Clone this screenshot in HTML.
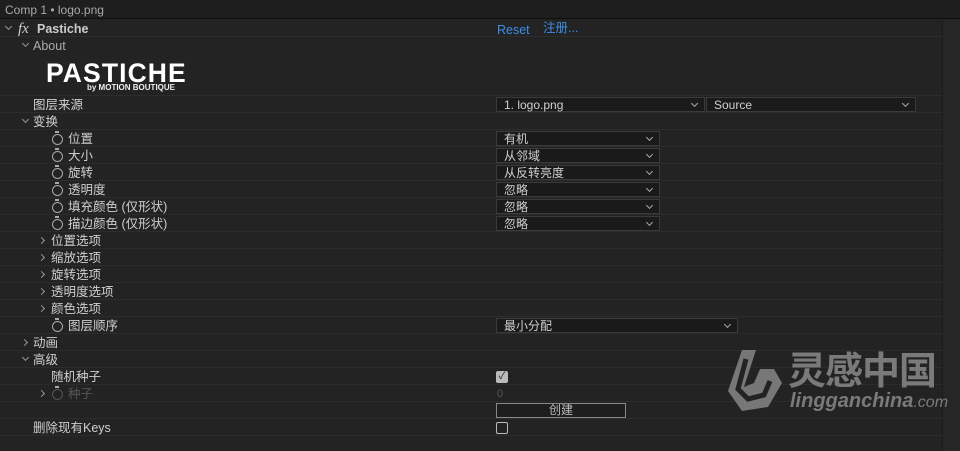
<!DOCTYPE html>
<html><head><meta charset="utf-8"><style>
*{margin:0;padding:0;box-sizing:border-box}
body{width:960px;height:451px;background:#232323;overflow:hidden;position:relative;font-family:"Liberation Sans","Noto Sans CJK SC",sans-serif;font-size:12px;color:#c8c8c8}
.top{position:absolute;left:0;top:0;width:960px;height:19px;background:#1e1e1e;border-bottom:1px solid #0e0e0e}
.top span{position:absolute;left:5px;top:3px;font-size:12px;line-height:14px;color:#a8a8a8}
.row{position:absolute;left:0;width:942px;height:17px;border-bottom:1px solid #2c2c2c}
.t{position:absolute;top:1px;height:16px;line-height:16px;white-space:nowrap;font-size:12.5px;color:#cfcfcf}
.ar{position:absolute;top:4px;width:8px;height:8px}
.ar.d:before,.ar.r:before{content:"";position:absolute;left:1px;top:0;width:4px;height:4px;border-right:1px solid #999;border-bottom:1px solid #999}
.ar.d:before{transform:rotate(45deg)}
.ar.r:before{transform:rotate(-45deg);top:2px}
.sw{position:absolute;top:4px;width:11px;height:11px;border:1.5px solid #aaa;border-radius:50%}
.sw:before{content:"";position:absolute;left:2px;top:-4px;width:4px;height:2px;background:#aaa}
.dd{position:absolute;height:15px;background:#1a1a1a;border:1px solid #3a3a3a;color:#d0d0d0;font-size:12px;padding-left:7px;line-height:14px;white-space:nowrap}
.dd:after{content:"";position:absolute;right:7px;top:3px;width:4px;height:4px;border-right:1px solid #aaa;border-bottom:1px solid #aaa;transform:rotate(45deg)}
.sb{position:absolute;left:942px;top:20px;width:18px;height:431px;background:#262626;border-left:1px solid #1c1c1c}
</style></head><body>
<div class="top"><span>Comp 1 • logo.png</span></div>
<div class="sb"></div>
<div class="row" style="top:20px"><span class="ar d" style="left:5px"></span><span class="t" style="left:18px;font-style:italic;font-family:'Liberation Serif',serif;font-size:15px">fx</span><span class="t" style="left:37px;font-weight:bold;color:#ccc">Pastiche</span><span class="t" style="left:497px;top:2px;color:#3d8ee6">Reset</span><span class="t" style="left:543px;top:0px;color:#3d8ee6">注册...</span></div>
<div class="row" style="top:37px;border:none"><span class="ar d" style="left:22px"></span><span class="t" style="left:33px;color:#aaa">About</span></div>
<div class="row" style="top:54px;height:42px"><span style="position:absolute;left:46px;top:5px;line-height:28px;font-weight:900;font-size:26.5px;color:#fff;letter-spacing:1.1px">PASTICHE</span><span style="position:absolute;left:87px;top:29px;line-height:9px;font-size:8px;font-weight:bold;color:#eee">by MOTION BOUTIQUE</span></div>
<div class="row" style="top:96px"><span class="t" style="left:33px">图层来源</span><div class="dd" style="left:496px;top:1px;width:209px">1. logo.png</div><div class="dd" style="left:706px;top:1px;width:210px">Source</div></div>
<div class="row" style="top:113px"><span class="ar d" style="left:22px"></span><span class="t" style="left:33px">变换</span></div>
<div class="row" style="top:130px"><span class="sw" style="left:52px"></span><span class="t" style="left:68px">位置</span><div class="dd" style="left:496px;top:1px;width:164px">有机</div></div>
<div class="row" style="top:147px"><span class="sw" style="left:52px"></span><span class="t" style="left:68px">大小</span><div class="dd" style="left:496px;top:1px;width:164px">从邻域</div></div>
<div class="row" style="top:164px"><span class="sw" style="left:52px"></span><span class="t" style="left:68px">旋转</span><div class="dd" style="left:496px;top:1px;width:164px">从反转亮度</div></div>
<div class="row" style="top:181px"><span class="sw" style="left:52px"></span><span class="t" style="left:68px">透明度</span><div class="dd" style="left:496px;top:1px;width:164px">忽略</div></div>
<div class="row" style="top:198px"><span class="sw" style="left:52px"></span><span class="t" style="left:68px">填充颜色 (仅形状)</span><div class="dd" style="left:496px;top:1px;width:164px">忽略</div></div>
<div class="row" style="top:215px"><span class="sw" style="left:52px"></span><span class="t" style="left:68px">描边颜色 (仅形状)</span><div class="dd" style="left:496px;top:1px;width:164px">忽略</div></div>
<div class="row" style="top:232px"><span class="ar r" style="left:38px"></span><span class="t" style="left:51px">位置选项</span></div>
<div class="row" style="top:249px"><span class="ar r" style="left:38px"></span><span class="t" style="left:51px">缩放选项</span></div>
<div class="row" style="top:266px"><span class="ar r" style="left:38px"></span><span class="t" style="left:51px">旋转选项</span></div>
<div class="row" style="top:283px"><span class="ar r" style="left:38px"></span><span class="t" style="left:51px">透明度选项</span></div>
<div class="row" style="top:300px"><span class="ar r" style="left:38px"></span><span class="t" style="left:51px">颜色选项</span></div>
<div class="row" style="top:317px"><span class="sw" style="left:52px"></span><span class="t" style="left:68px">图层顺序</span><div class="dd" style="left:496px;top:1px;width:242px">最小分配</div></div>
<div class="row" style="top:334px"><span class="ar r" style="left:21px"></span><span class="t" style="left:33px">动画</span></div>
<div class="row" style="top:351px"><span class="ar d" style="left:22px"></span><span class="t" style="left:33px">高级</span></div>
<div class="row" style="top:368px"><span class="t" style="left:51px">随机种子</span><span style="position:absolute;left:496px;top:3px;width:12px;height:12px;background:#bbb;border-radius:2px;color:#222;font-size:10px;line-height:12px;text-align:center">✓</span></div>
<div class="row" style="top:385px"><span class="ar r" style="left:38px"></span><span class="sw" style="left:52px;border-color:#555"></span><span class="t" style="left:68px;color:#555">种子</span><span class="t" style="left:497px;color:#555;font-size:11px">0</span></div>
<div class="row" style="top:402px"><div style="position:absolute;left:496px;top:1px;width:130px;height:15px;border:1px solid #888;background:#1e1e1e;text-align:center;font-size:12px;line-height:13px;color:#bbb">创建</div></div>
<div class="row" style="top:419px"><span class="t" style="left:33px">删除现有Keys</span><span style="position:absolute;left:496px;top:3px;width:12px;height:12px;border:1.5px solid #bbb;border-radius:2px"></span></div>
<svg style="position:absolute;left:724px;top:347px" width="60" height="66" viewBox="0 0 60 66"><path d="M18 3 L32 3 L20 40 L30 36 L36 22 L50 22 L58 36 L44 60 L18 64 L4 44 Z" fill="#777"/><path d="M22 12 L14 42 L24 52 L40 48 L46 34" fill="none" stroke="#232323" stroke-width="5"/></svg>
<span style="position:absolute;left:788px;top:352px;line-height:40px;font-size:38px;font-weight:bold;color:#7a7a7a;letter-spacing:-1px">灵感中国</span>
<span style="position:absolute;left:790px;top:390px;line-height:22px;font-size:20px;font-weight:bold;color:#7a7a7a;font-style:italic">lingganchina<span style="font-weight:normal;font-size:16px">.com</span></span>
</body></html>
